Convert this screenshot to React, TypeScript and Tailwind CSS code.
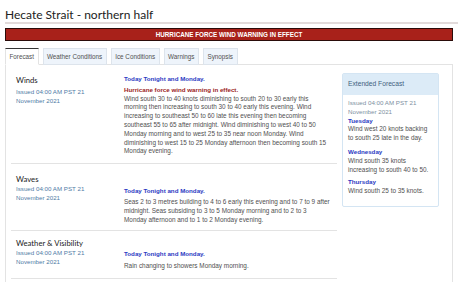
import React from 'react'

const tabs = ['Forecast', 'Weather Conditions', 'Ice Conditions', 'Warnings', 'Synopsis']

type SectionProps = {
  title: string
  period: string
  warning?: string
  body: string
  titleTop: string
  issuedTop: string
  rightTop: string
  bodyTop: string
  bottom: string
  last?: boolean
}

function Section({ title, period, warning, body, titleTop, issuedTop, rightTop, bodyTop, bottom, last }: SectionProps) {
  return (
    <div className={`flex items-start pl-[5px] ${bottom} ${last ? '' : 'border-b border-[#e3e3e3]'}`}>
      <div className={`w-[108px] shrink-0 ${titleTop}`}>
        <div className="font-['Lato',sans-serif] text-[7.7px] leading-[12px] text-[#222]">{title}</div>
        <div className={`${issuedTop} w-[90px] text-[6.2px] leading-[8.8px] text-[#4f7ba6]`}>
          Issued 04:00 AM PST 21 November 2021
        </div>
      </div>
      <div className={`w-[206.7px] ${rightTop}`}>
        <div className="font-bold text-[6.2px] leading-[8.8px] text-[#2a39c2]">{period}</div>
        {warning && <div className="mt-[2px] font-bold text-[6.2px] leading-[8.8px] text-[#9b1c1c]">{warning}</div>}
        <div className={`${bodyTop} text-[6.4px] leading-[8.8px] text-[#505050]`}>{body}</div>
      </div>
    </div>
  )
}

export default function App() {
  return (
    <div className="w-[458px] h-[282px] overflow-hidden bg-white font-['Liberation_Sans',Arial,sans-serif] px-[5px]">
      {/* Title */}
      <h1 className="font-['Lato',sans-serif] text-[12px] leading-[14px] text-[#222] pt-[8px] border-b-2 border-[#e2dbdb] w-[453px]">
        Hecate Strait - northern half
      </h1>

      {/* Warning banner */}
      <div className="mt-[4px] w-[448px] h-[13px] bg-[#a8211a] border border-[#2a0c0a] flex items-center justify-center">
        <span className="text-white font-bold text-[6.3px]">HURRICANE FORCE WIND WARNING IN EFFECT</span>
      </div>

      {/* Tabs */}
      <div className="mt-[7px] flex gap-[4px] h-[17px] relative z-10">
        {tabs.map((t, i) => (
          <div
            key={t}
            className={`px-[3.5px] flex items-center text-[6.3px] text-[#505050] border ${
              i === 0 ? 'bg-white border-[#e3e3e3] border-t-[#333] border-b-white' : 'bg-[#eef4fb] border-[#dde4ec]'
            }`}
          >
            {t}
          </div>
        ))}
      </div>

      {/* Panel */}
      <div className="-mt-px w-[448px] h-[230px] border border-[#e3e3e3] flex pl-[5px]">
        <div className="w-[326px] shrink-0">
          <Section
            title="Winds"
            period="Today Tonight and Monday."
            warning="Hurricane force wind warning in effect."
            body="Wind south 30 to 40 knots diminishing to south 20 to 30 early this morning then increasing to south 30 to 40 early this evening. Wind increasing to southeast 50 to 60 late this evening then becoming southeast 55 to 65 after midnight. Wind diminishing to west 40 to 50 Monday morning and to west 25 to 35 near noon Monday. Wind diminishing to west 15 to 25 Monday afternoon then becoming south 15 Monday evening."
            titleTop="pt-[9px]"
            issuedTop="mt-[2px]"
            rightTop="pt-[10px]"
            bodyTop="mt-0"
            bottom="pb-[7px]"
          />
          <Section
            title="Waves"
            period="Today Tonight and Monday."
            body="Seas 2 to 3 metres building to 4 to 6 early this evening and to 7 to 9 after midnight. Seas subsiding to 3 to 5 Monday morning and to 2 to 3 Monday afternoon and to 1 to 2 Monday evening."
            titleTop="pt-[9px]"
            issuedTop="mt-0"
            rightTop="pt-[23px]"
            bodyTop="mt-[2px]"
            bottom="pb-[6px]"
          />
          <Section
            title="Weather & Visibility"
            period="Today Tonight and Monday."
            body="Rain changing to showers Monday morning."
            titleTop="pt-[6px]"
            issuedTop="mt-0"
            rightTop="pt-[19px]"
            bodyTop="mt-[3px]"
            bottom="pb-[7px]"
          />
        </div>

        {/* Extended forecast */}
        <div className="ml-[5px] mt-[8px] w-[97px] self-start border border-[#d4e5f3] rounded-[2px]">
          <div className="bg-[#dcebf7] h-[21px] flex items-center px-[5px] text-[6.7px] text-[#3f5f7e]">
            Extended Forecast
          </div>
          <div className="px-[5px] pt-[4px] pb-[10px] leading-[8.8px]">
            <div className="text-[6.2px] text-[#7d8fa1]">Issued 04:00 AM PST 21 November 2021</div>
            <div className="font-bold text-[6.2px] text-[#2a39c2]">Tuesday</div>
            <div className="text-[6.4px] text-[#505050]">Wind west 20 knots backing to south 25 late in the day.</div>
            <div className="mt-[5px] font-bold text-[6.2px] text-[#2a39c2]">Wednesday</div>
            <div className="text-[6.4px] text-[#505050]">Wind south 35 knots increasing to south 40 to 50.</div>
            <div className="mt-[4px] font-bold text-[6.2px] text-[#2a39c2]">Thursday</div>
            <div className="text-[6.4px] text-[#505050]">Wind south 25 to 35 knots.</div>
          </div>
        </div>
      </div>
    </div>
  )
}
